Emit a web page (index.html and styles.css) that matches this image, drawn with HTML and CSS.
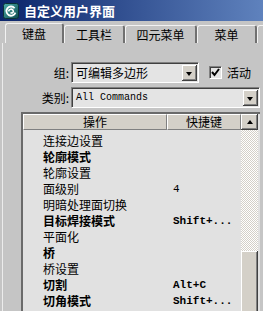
FILE: index.html
```html
<!DOCTYPE html>
<html lang="zh">
<head>
    <meta charset="UTF-8">
    <title>自定义用户界面</title>
    <link rel="stylesheet" href="styles.css">
</head>
<body>
    <div class="window">
        <!-- 标题栏 -->
        <div class="titlebar">
            <svg class="app-icon" width="16" height="16" viewBox="0 0 16 16">
                <defs>
                    <linearGradient id="ig" x1="0" y1="0" x2="1" y2="1">
                        <stop offset="0" stop-color="#4fb0ac"/>
                        <stop offset="1" stop-color="#0c4a4e"/>
                    </linearGradient>
                </defs>
                <rect x="0.5" y="0.5" width="15" height="15" rx="2" fill="url(#ig)" stroke="#0a3236"/>
                <path d="M11.6 5.2 A4.6 4.6 0 1 0 12.4 9.6" fill="none" stroke="#fff" stroke-width="1.8"/>
                <path d="M5.6 8.4 A2.4 2.4 0 0 1 10.2 7.6 A1.6 1.6 0 0 1 7.6 9.4" fill="none" stroke="#fff" stroke-width="1.6"/>
            </svg>
            <span class="title">自定义用户界面</span>
        </div>

        <!-- 选项卡 -->
        <div class="tabs">
            <div class="tab tab-keys active">键盘</div>
            <div class="tab tab-tools">工具栏</div>
            <div class="tab tab-quad">四元菜单</div>
            <div class="tab tab-menu">菜单</div>
            <div class="tab tab-more"></div>
        </div>

        <div class="panel">
            <div class="field">
                <label class="field-label">组:</label>
                <div class="select select-group">
                    <span class="select-text">可编辑多边形</span>
                    <span class="drop"></span>
                </div>
                <span class="check">
                    <svg width="9" height="9" viewBox="0 0 9 9"><path d="M1 4 L3.5 7 L8 1" fill="none" stroke="#000" stroke-width="2"/></svg>
                </span>
                <span class="check-label">活动</span>
            </div>
            <div class="field">
                <label class="field-label">类别:</label>
                <div class="select select-wide">
                    <span class="select-text mono">All Commands</span>
                    <span class="drop"></span>
                </div>
            </div>

            <!-- 命令列表 -->
            <div class="list">
                <div class="list-head">
                    <div class="head-cell col-action">操作</div>
                    <div class="head-cell col-key">快捷键</div>
                    <div class="scroll-btn"><span class="arrow-up"></span></div>
                </div>
                <div class="list-body">
                    <div class="rows">
                        <div class="row"><span class="col-action">连接边设置</span><span class="col-key"></span></div>
                        <div class="row bold"><span class="col-action">轮廓模式</span><span class="col-key"></span></div>
                        <div class="row"><span class="col-action">轮廓设置</span><span class="col-key"></span></div>
                        <div class="row"><span class="col-action">面级别</span><span class="col-key">4</span></div>
                        <div class="row"><span class="col-action">明暗处理面切换</span><span class="col-key"></span></div>
                        <div class="row bold"><span class="col-action">目标焊接模式</span><span class="col-key">Shift+...</span></div>
                        <div class="row"><span class="col-action">平面化</span><span class="col-key"></span></div>
                        <div class="row bold"><span class="col-action">桥</span><span class="col-key"></span></div>
                        <div class="row"><span class="col-action">桥设置</span><span class="col-key"></span></div>
                        <div class="row bold"><span class="col-action">切割</span><span class="col-key">Alt+C</span></div>
                        <div class="row bold"><span class="col-action">切角模式</span><span class="col-key">Shift+...</span></div>
                    </div>
                    <div class="scrollbar">
                        <div class="track"></div>
                        <div class="thumb"></div>
                    </div>
                </div>
            </div>
        </div>
    </div>
</body>
</html>
```

FILE: styles.css
```css
body {
    margin: 0;
    padding: 0;
    background-color: #c5c5c5;
    font-family: "Noto Sans CJK SC", "Liberation Sans", sans-serif;
    font-size: 12px;
    color: #000;
}
.window {
    width: 263px;
    height: 311px;
    overflow: hidden;
}
.titlebar {
    height: 21px;
    display: flex;
    align-items: center;
    gap: 5px;
    padding-left: 3px;
    background: linear-gradient(to right, #0a246a, #5f82bd);
    box-sizing: border-box;
}
.app-icon {
    flex: none;
}
.title {
    color: #fff;
    font-weight: bold;
    font-size: 13px;
    line-height: 21px;
}
.tabs {
    height: 22px;
    display: flex;
    align-items: flex-end;
    padding-left: 5px;
    box-sizing: border-box;
}
.tab {
    height: 18px;
    box-sizing: border-box;
    border-top: 1px solid #f2f2f2;
    border-left: 1px solid #f2f2f2;
    border-right: 2px solid #707070;
    border-radius: 3px 3px 0 0;
    text-align: center;
    line-height: 17px;
    font-size: 12px;
    flex: none;
}
.tab.active {
    height: 20px;
    line-height: 19px;
}
.tab-keys { width: 59px; }
.tab-tools { width: 61px; }
.tab-quad { width: 72px; }
.tab-menu { width: 60px; }
.tab-more { width: 20px; }
.panel {
    margin-left: 2px;
    border-left: 1px solid #ececec;
    padding-top: 19px;
    height: 268px;
    box-sizing: border-box;
}
.field {
    display: flex;
    align-items: center;
    height: 21px;
    margin-bottom: 4px;
}
.field-label {
    width: 66px;
    margin-right: 2px;
    text-align: right;
    flex: none;
}
.select {
    height: 21px;
    box-sizing: border-box;
    background: #e4e4e4;
    border: 1px solid;
    border-color: #808080 #fff #fff #808080;
    box-shadow: inset 1px 1px #404040;
    display: flex;
    align-items: center;
    justify-content: space-between;
    padding: 0 1px 0 4px;
    flex: none;
}
.select-group { width: 128px; }
.select-wide { width: 189px; }
.select-text {
    line-height: 18px;
    padding-top: 1px;
}
.mono {
    font-family: "Liberation Mono", monospace;
    font-size: 10px;
}
.drop {
    width: 15px;
    height: 16px;
    margin-top: 1px;
    box-sizing: border-box;
    background: #d4d0c8;
    box-shadow: inset -1px -1px #404040, inset 1px 1px #fff, inset -2px -2px #808080;
    position: relative;
}
.drop::after {
    content: "";
    position: absolute;
    left: 4px;
    top: 7px;
    border-left: 3.5px solid transparent;
    border-right: 3.5px solid transparent;
    border-top: 4px solid #000;
}
.check {
    width: 13px;
    height: 13px;
    margin-left: 10px;
    box-sizing: border-box;
    background: #e4e4e4;
    border: 1px solid;
    border-color: #808080 #fff #fff #808080;
    box-shadow: inset 1px 1px #404040;
    display: flex;
    align-items: center;
    justify-content: center;
    flex: none;
}
.check-label {
    margin-left: 5px;
}
.list {
    margin-top: 2px;
    margin-left: 18px;
    width: 237px;
    border-top: 2px solid #6a6a6a;
    border-left: 2px solid #6a6a6a;
    background: #e1e1e1;
}
.list-head {
    display: flex;
    height: 16px;
}
.head-cell {
    box-sizing: border-box;
    background: #d4d0c8;
    border-top: 1px solid #fff;
    border-left: 1px solid #fff;
    border-right: 1px solid #808080;
    border-bottom: 1px solid #808080;
    text-align: center;
    line-height: 14px;
}
.list-head .col-action { width: 144px; }
.list-head .col-key { width: 74px; }
.scroll-btn {
    width: 17px;
    box-sizing: border-box;
    background: #d4d0c8;
    box-shadow: inset -1px -1px #404040, inset 1px 1px #fff, inset -2px -2px #808080;
    display: flex;
    align-items: center;
    justify-content: center;
}
.arrow-up {
    border-left: 3.5px solid transparent;
    border-right: 3.5px solid transparent;
    border-bottom: 4px solid #000;
}
.list-body {
    display: flex;
    height: 190px;
}
.rows {
    width: 218px;
    padding-top: 3px;
}
.row {
    display: flex;
    height: 16px;
    line-height: 16px;
}
.row .col-action {
    width: 144px;
    padding-left: 20px;
    box-sizing: border-box;
}
.row .col-key {
    padding-left: 6px;
    font-family: "Liberation Mono", monospace;
    font-size: 11px;
}
.bold {
    font-weight: bold;
}
.scrollbar {
    width: 17px;
    display: flex;
    flex-direction: column;
}
.track {
    height: 121px;
    background: repeating-conic-gradient(#d4d0c8 0 25%, #fff 0 50%) 0 0 / 2px 2px;
}
.thumb {
    flex: 1;
    background: #d4d0c8;
    box-shadow: inset -1px 0 #404040, inset 1px 1px #fff, inset -2px 0 #808080;
}
```
